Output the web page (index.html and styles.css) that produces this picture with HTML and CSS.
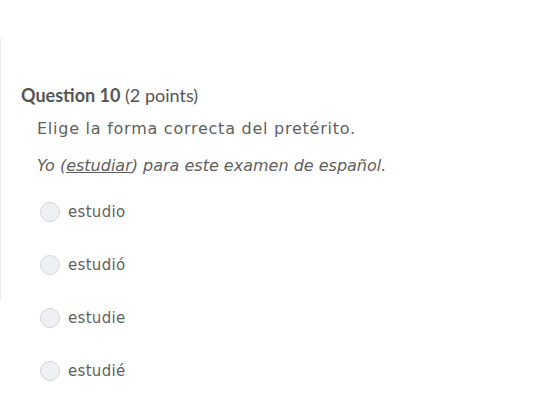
FILE: index.html
```html
<!DOCTYPE html>
<html lang="es">
<head>
<meta charset="utf-8">
<link rel="stylesheet" href="styles.css">
</head>
<body>
<div class="frame">
  <div class="side"></div>
  <div class="question">
    <h2 class="qtitle"><span class="qnum">Question 10</span> <span class="qpts">(2 points)</span></h2>
    <div class="qbody">
      <p class="prompt">Elige la forma correcta del pretérito.</p>
      <p class="sentence">Yo (<u>estudiar</u>) para este examen de español.</p>
      <ul class="options">
        <li class="opt"><span class="radio"></span><span class="label">estudio</span></li>
        <li class="opt"><span class="radio"></span><span class="label">estudió</span></li>
        <li class="opt"><span class="radio"></span><span class="label">estudie</span></li>
        <li class="opt"><span class="radio"></span><span class="label">estudié</span></li>
      </ul>
    </div>
  </div>
</div>
</body>
</html>
```
FILE: styles.css
```css
html, body {
  margin: 0;
  padding: 0;
  background: #ffffff;
}
body {
  width: 546px;
  height: 412px;
  overflow: hidden;
  position: relative;
}
.side {
  position: absolute;
  left: 0;
  top: 38px;
  width: 1px;
  height: 262px;
  background: #ececec;
}
.question {
  padding: 84px 0 0 21px;
}
.qtitle {
  margin: 0;
  font-family: Lato, sans-serif;
  font-size: 18px;
  line-height: 22px;
  color: #555555;
  font-weight: normal;
}
.qnum {
  font-weight: bold;
}
.qbody {
  padding-left: 16px;
  font-family: "DejaVu Sans", sans-serif;
  color: #5f5f5f;
}
.prompt {
  margin: 12px 0 0;
  font-size: 16px;
  line-height: 22px;
  letter-spacing: 0.75px;
}
.sentence {
  margin: 15px 0 0;
  font-size: 16px;
  line-height: 22px;
  font-style: italic;
}
.options {
  list-style: none;
  margin: 24px 0 0;
  padding: 0 0 0 3px;
  display: flex;
  flex-direction: column;
  gap: 31px;
}
.opt {
  display: flex;
  align-items: center;
  gap: 8px;
  height: 22px;
}
.radio {
  width: 20px;
  height: 20px;
  border-radius: 50%;
  border: 1px solid #d4d6da;
  background: #eef0f3;
  box-sizing: border-box;
}
.label {
  font-size: 15px;
  letter-spacing: 0.3px;
  color: #5f5f5f;
}
```
